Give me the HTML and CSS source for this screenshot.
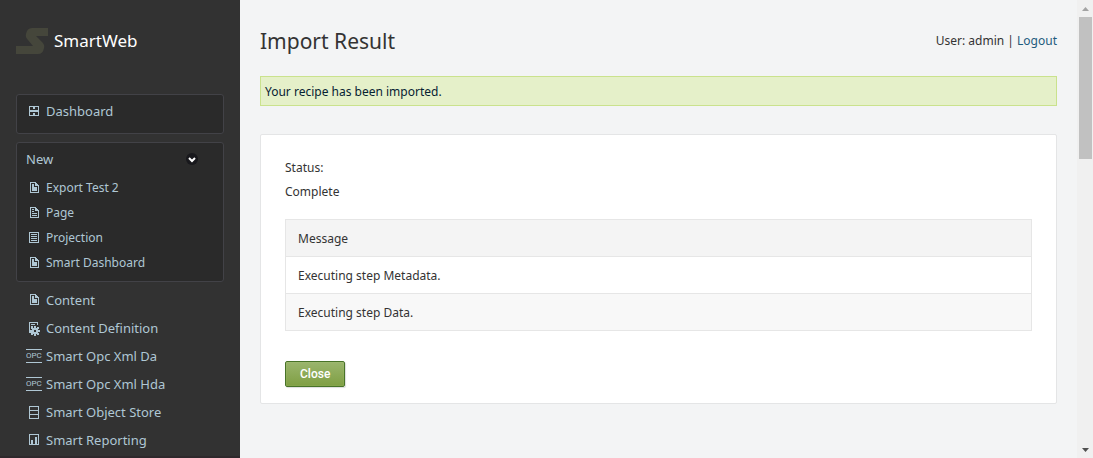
FILE: index.html
```html
<!DOCTYPE html>
<html lang="en">
<head>
<meta charset="utf-8">
<title>Import Result - SmartWeb</title>
<link rel="stylesheet" href="styles.css">
</head>
<body>
<svg class="defs" aria-hidden="true">
  <symbol id="doc" viewBox="0 0 16 16"><path fill-rule="evenodd" d="M4 2h6v1h1v1h1v1h1v8H4zM5 3v9h7V6H9V3zM6 4h2v3h3v4H6z"/></symbol>
  <symbol id="page" viewBox="0 0 16 16"><path fill-rule="evenodd" d="M4 2h6v1h1v1h1v1h1v8H4zM5 3v9h7V6H9V3zM6 4h2v1H6zM6 6h2v1H6zM6 8h5v1H6zM6 10h5v1H6z"/></symbol>
  <symbol id="list" viewBox="0 0 16 16"><path fill-rule="evenodd" d="M3 2h10v11H3zM4 3v9h8V3zM5 4h6v1H5zM5 6h6v1H5zM5 8h6v1H5zM5 10h6v1H5z"/></symbol>
  <symbol id="dash" viewBox="0 0 16 16"><path fill-rule="evenodd" d="M3 3h10v10H3zM4 4v3h1v1H4v4h3v-2h2v2h3V8h-1V7h1V4H9v2H7V4zM6 7h4v1H6z"/><path d="M4 7h8v2H4z"/></symbol>
  <symbol id="store" viewBox="0 0 16 16"><path fill-rule="evenodd" d="M3 2h10v13H3zM4 3v3h8V3zM4 7v3h8V7zM4 11v3h8v-3z"/></symbol>
  <symbol id="chart" viewBox="0 0 16 16"><path fill-rule="evenodd" d="M3 2h10v11H3zM4 3v9h8V3zM5 8h2v4H5zM9 5h2v7H9z"/></symbol>
  <symbol id="gear" viewBox="0 0 16 16"><path d="M3 2h9v3h-1V3H4v9h2v1H3zM5 4h4v1H5zM5 6h2v1H5z"/><path fill-rule="evenodd" d="M8 6h2v2h1V7h2v2h-1v1h2v2h-2v1h1v2h-2v-1h-1v2H8v-2H7v1H5v-2h1v-1H4v-2h2V9H5V7h2v1h1zM8 10v2h2v-2z"/></symbol>
</svg>
<div class="app">
  <aside class="sidebar">
    <a class="brand" href="#">
      <svg class="logo" viewBox="0 0 32 26" aria-hidden="true"><path d="M32 0v8H20l6 6q3 3 2 6-1 6-6 6H0v-8h17l-5-6q-3-3-2-6 1-6 6-6z"/></svg>
      <span>SmartWeb</span>
    </a>
    <nav class="menu">
      <div class="box dashboard">
        <a class="item" href="#"><svg class="icon"><use href="#dash"/></svg>Dashboard</a>
      </div>
      <div class="box group">
        <div class="heading">
          <span>New</span>
          <button class="toggle" aria-label="Collapse New"><svg viewBox="0 0 12 12"><path d="M3 5l3 3 3-3"/></svg></button>
        </div>
        <a class="item sub" href="#"><svg class="icon"><use href="#doc"/></svg>Export Test 2</a>
        <a class="item sub" href="#"><svg class="icon"><use href="#page"/></svg>Page</a>
        <a class="item sub" href="#"><svg class="icon"><use href="#list"/></svg>Projection</a>
        <a class="item sub" href="#"><svg class="icon"><use href="#doc"/></svg>Smart Dashboard</a>
      </div>
      <div class="links">
        <a class="item" href="#"><svg class="icon"><use href="#doc"/></svg>Content</a>
        <a class="item" href="#"><svg class="icon"><use href="#gear"/></svg>Content Definition</a>
        <a class="item" href="#"><span class="opc">OPC</span>Smart Opc Xml Da</a>
        <a class="item" href="#"><span class="opc">OPC</span>Smart Opc Xml Hda</a>
        <a class="item" href="#"><svg class="icon"><use href="#store"/></svg>Smart Object Store</a>
        <a class="item" href="#"><svg class="icon"><use href="#chart"/></svg>Smart Reporting</a>
      </div>
    </nav>
  </aside>
  <main class="main">
    <header class="header">
      <h1>Import Result</h1>
      <div class="user">User: admin | <a href="#">Logout</a></div>
    </header>
    <div class="notice" role="status">Your recipe has been imported.</div>
    <section class="card">
      <div class="status">
        <div>Status:</div>
        <div>Complete</div>
      </div>
      <table class="messages">
        <thead><tr><th scope="col">Message</th></tr></thead>
        <tbody>
          <tr><td>Executing step Metadata.</td></tr>
          <tr><td>Executing step Data.</td></tr>
        </tbody>
      </table>
      <button class="close">Close</button>
    </section>
  </main>
  <div class="scrollbar" aria-hidden="true">
    <svg class="arrow up" viewBox="0 0 16 17"><path d="M5 11l3.500-4 3.500 4z"/></svg>
    <div class="thumb"></div>
    <svg class="arrow down" viewBox="0 0 16 17"><path d="M5 7h7l-3.500 4z"/></svg>
  </div>
</div>
</body>
</html>
```
FILE: styles.css
```css
* { box-sizing: border-box; }
body {
  margin: 0;
  overflow: hidden;
  background: #f3f4f5;
  color: #333;
  font: 12px/24px "Noto Sans", "Open Sans", sans-serif;
}
a { text-decoration: none; }
.defs { display: none; }
.app { display: flex; height: 100vh; }

.sidebar {
  flex: 0 0 240px;
  overflow: hidden;
  padding: 28px 16px 0;
  border-bottom: 2px solid #2e292c;
  background: #323232;
}
.brand {
  display: flex;
  align-items: center;
  gap: 6px;
  height: 26px;
  color: #fff;
  font-size: 17px;
}
.logo { width: 32px; height: 26px; fill: #45463b; }
.menu { padding-top: 40px; }
.box {
  margin-bottom: 8px;
  border: 1px solid #424247;
  border-radius: 3px;
  background: #2a2a2a;
}
.dashboard { padding: 2px 9px 8px; }
.group { padding: 2px 9px 6px; }
.links { padding: 0 10px; margin-top: -4px; }
.heading {
  display: flex;
  align-items: center;
  justify-content: space-between;
  height: 28px;
  margin-bottom: 2px;
  padding-right: 16px;
  color: #afc7d4;
  font-size: 13px;
}
.toggle {
  width: 12px;
  height: 12px;
  padding: 0;
  border: 0;
  border-radius: 6px;
  background: #18181c;
}
.toggle svg { display: block; fill: none; stroke: #fff; stroke-width: 2; }
.item {
  display: flex;
  align-items: center;
  gap: 4px;
  height: 28px;
  color: #afc7d4;
  font-size: 13px;
}
.item.sub { height: 25px; font-size: 12px; }
.icon { width: 16px; height: 16px; fill: #afc7d4; }
.opc {
  width: 16px;
  height: 14px;
  overflow: hidden;
  border: solid #afc7d4;
  border-width: 1px 0;
  font: 8px/12px Roboto, sans-serif;
}

.main { flex: 1; min-width: 0; padding: 24px 20px; }
.header { display: flex; align-items: center; justify-content: space-between; height: 34px; }
h1 { margin: 0; font-size: 21px; font-weight: 400; line-height: 34px; }
.user a { color: #1e5b7d; }
.notice {
  margin-top: 18px;
  padding: 3px 4px 1px;
  border: 1px solid #cae28d;
  background: #e5f0c9;
  color: #062232;
}
.card {
  margin-top: 28px;
  padding: 21px 24px 16px;
  border: 1px solid #e4e5e6;
  border-radius: 2px;
  background: #fff;
}
.messages { width: 100%; margin-top: 15px; border-collapse: collapse; border: 1px solid #e6e6e6; }
.messages th, .messages td {
  padding: 7px 12px 5px;
  border-bottom: 1px solid #e6e6e6;
  text-align: left;
  font-weight: 400;
}
.messages th { background: #f4f4f4; }
.messages tr:nth-child(2) td { background: #f8f8f8; }
.close {
  display: block;
  height: 26px;
  margin-top: 30px;
  padding: 0 14px;
  border: 1px solid #487328;
  border-radius: 2px;
  background: linear-gradient(#9ab56d, #7f9f43);
  box-shadow: inset 0 0 1px #bcd18f, 1px 1px 1px #ddd;
  color: #fff;
  font: 500 12px/24px Roboto, Arial, sans-serif;
}

.scrollbar {
  display: flex;
  flex: 0 0 16px;
  flex-direction: column;
  background: #f0f0f0;
}
.arrow { width: 16px; height: 17px; }
.up { fill: #a3a3a3; }
.down { margin-top: auto; fill: #505050; }
.thumb { height: 142px; margin: 0 1px 0 2px; background: #c1c1c1; }
```
